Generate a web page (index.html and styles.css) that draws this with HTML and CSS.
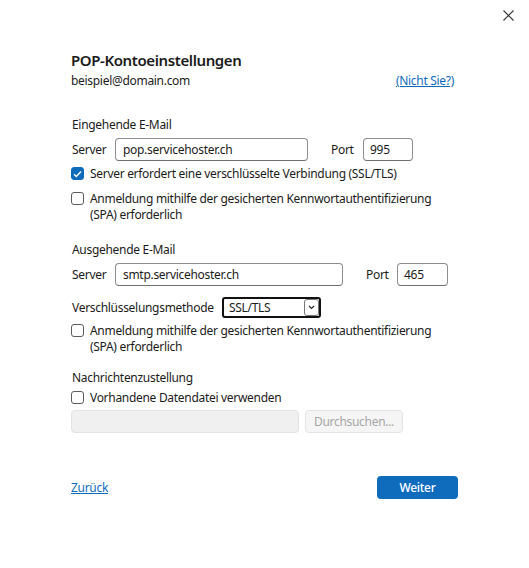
FILE: index.html
```html
<!DOCTYPE html>
<html lang="de">
<head>
<meta charset="utf-8">
<link rel="stylesheet" href="styles.css">
</head>
<body>
<div class="dialog">
  <div class="topbar">
    <span class="close" aria-label="Schließen">
      <svg width="11" height="11" viewBox="0 0 11 11"><path d="M0.5 0.5 L10.5 10.5 M10.5 0.5 L0.5 10.5" stroke="#333" stroke-width="1.1" fill="none"/></svg>
    </span>
  </div>
  <div class="content">
    <h1 class="title">POP-Kontoeinstellungen</h1>
    <div class="account">
      <span>beispiel@domain.com</span>
      <a class="link" href="#">(Nicht Sie?)</a>
    </div>

    <div class="section-title first">Eingehende E-Mail</div>
    <div class="field-row">
      <span class="label srv">Server</span>
      <div class="input server-in">pop.servicehoster.ch</div>
      <span class="label port-label">Port</span>
      <div class="input port">995</div>
    </div>
    <div class="check-row single">
      <span class="box checked"><svg width="9" height="8" viewBox="0 0 9 8"><path d="M1 4.2 L3.3 6.4 L8 1.4" stroke="#fff" stroke-width="1.4" fill="none"/></svg></span>
      <span class="check-text">Server erfordert eine verschlüsselte Verbindung (SSL/TLS)</span>
    </div>
    <div class="check-row spa1">
      <span class="box"></span>
      <span class="check-text">Anmeldung mithilfe der gesicherten Kennwortauthentifizierung<br>(SPA) erforderlich</span>
    </div>

    <div class="section-title out">Ausgehende E-Mail</div>
    <div class="field-row">
      <span class="label srv">Server</span>
      <div class="input server-out">smtp.servicehoster.ch</div>
      <span class="label port-label2">Port</span>
      <div class="input port port2">465</div>
    </div>
    <div class="select-row">
      <span class="label enc">Verschlüsselungsmethode</span>
      <div class="select">
        <span class="select-val">SSL/TLS</span>
        <span class="select-btn"><svg width="7" height="5" viewBox="0 0 7 5"><path d="M1 1 L3.5 3.5 L6 1" stroke="#222" stroke-width="1.1" fill="none"/></svg></span>
      </div>
    </div>
    <div class="check-row spa2">
      <span class="box"></span>
      <span class="check-text">Anmeldung mithilfe der gesicherten Kennwortauthentifizierung<br>(SPA) erforderlich</span>
    </div>

    <div class="section-title delivery">Nachrichtenzustellung</div>
    <div class="check-row single datafile">
      <span class="box"></span>
      <span class="check-text">Vorhandene Datendatei verwenden</span>
    </div>
    <div class="file-row">
      <div class="input disabled"></div>
      <div class="btn-disabled">Durchsuchen...</div>
    </div>

    <div class="footer">
      <a class="link back" href="#">Zurück</a>
      <div class="primary">Weiter</div>
    </div>
  </div>
</div>
</body>
</html>
```
FILE: styles.css
```css
* { box-sizing: border-box; }
html, body { margin: 0; padding: 0; background: #ffffff; }
body {
  font-family: "Noto Sans", "Open Sans", sans-serif;
  font-size: 12px;
  letter-spacing: -0.3px;
  color: #1b1b1b;
  width: 529px;
  height: 568px;
}
.dialog { position: relative; }
.topbar {
  display: flex;
  justify-content: flex-end;
  padding: 10px 15px 0 0;
  height: 21px;
}
.close { display: block; width: 11px; height: 11px; }
.close svg { display: block; }
.content { padding-left: 71px; width: 458px; box-sizing: content-box; }
.title {
  margin: 0;
  padding-top: 28px;
  font-size: 15px;
  font-weight: 600;
  letter-spacing: -0.4px;
  line-height: 22px;
  color: #1b1b1b;
}
.account {
  display: flex;
  justify-content: space-between;
  align-items: center;
  width: 383px;
  line-height: 18px;
  margin-top: 1px;
}
.link { color: #0f6cbd; text-decoration: underline; }
.section-title { line-height: 16px; padding-left: 1px; }
.section-title.first { margin-top: 27px; }
.section-title.out { margin-top: 19px; }
.section-title.delivery { margin-top: 15px; }
.field-row {
  display: flex;
  align-items: center;
  height: 23px;
  margin-top: 5px;
}
.label { padding-left: 1px; flex: none; }
.label.srv { width: 44px; }
.label.enc { width: 151px; }
.input {
  flex: none;
  height: 23px;
  border: 1px solid #8d8d8d;
  border-bottom-color: #6f6f6f;
  border-radius: 4px;
  padding: 0 7px;
  line-height: 20px;
  display: flex;
  align-items: center;
}
.server-in { width: 193px; }
.server-out { width: 228px; }
.port-label { margin-left: 22px; width: 33px; }
.port-label2 { margin-left: 22px; width: 32px; }
.port { width: 50px; padding: 0 6px; }
.port2 { width: 51px; }
.check-row {
  display: flex;
  align-items: flex-start;
  line-height: 16px;
}
.check-row.single { margin-top: 5px; }
.check-row.spa1 { margin-top: 9px; }
.check-row.spa2 { margin-top: 5px; }
.check-row.datafile { margin-top: 4px; }
.box {
  flex: none;
  width: 13px;
  height: 13px;
  border: 1px solid #5c5c5c;
  border-radius: 3px;
  margin-top: 1px;
  margin-right: 6px;
  display: flex;
  align-items: center;
  justify-content: center;
  background: #fff;
}
.box.checked { background: #0f6cbd; border-color: #0f6cbd; }
.box svg { display: block; }
.select-row {
  display: flex;
  align-items: center;
  margin-top: 11px;
  height: 21px;
}
.select {
  width: 99px;
  height: 21px;
  border: 2px solid #111;
  border-radius: 3px;
  display: flex;
  align-items: center;
  justify-content: space-between;
  padding-left: 5px;
  padding-right: 0;
}
.select-btn {
  width: 15px;
  height: 17px;
  border: 1px solid #777;
  border-radius: 3px;
  display: flex;
  align-items: center;
  justify-content: center;
  background: #fff;
}
.select-btn svg { display: block; }
.file-row {
  display: flex;
  margin-top: 4px;
  height: 23px;
}
.input.disabled {
  width: 228px;
  background: #f0f0f0;
  border: 1px solid #e3e3e3;
}
.btn-disabled {
  margin-left: 6px;
  width: 98px;
  height: 23px;
  background: #f5f5f5;
  border: 1px solid #e3e3e3;
  border-radius: 4px;
  color: #a6a6a6;
  display: flex;
  align-items: center;
  justify-content: center;
}
.footer {
  display: flex;
  justify-content: space-between;
  align-items: center;
  width: 387px;
  margin-top: 43px;
  height: 23px;
}
.primary {
  width: 81px;
  height: 23px;
  border-radius: 4px;
  background: #0f6cbd;
  color: #ffffff;
  display: flex;
  align-items: center;
  justify-content: center;
  font-weight: 500;
}
```
